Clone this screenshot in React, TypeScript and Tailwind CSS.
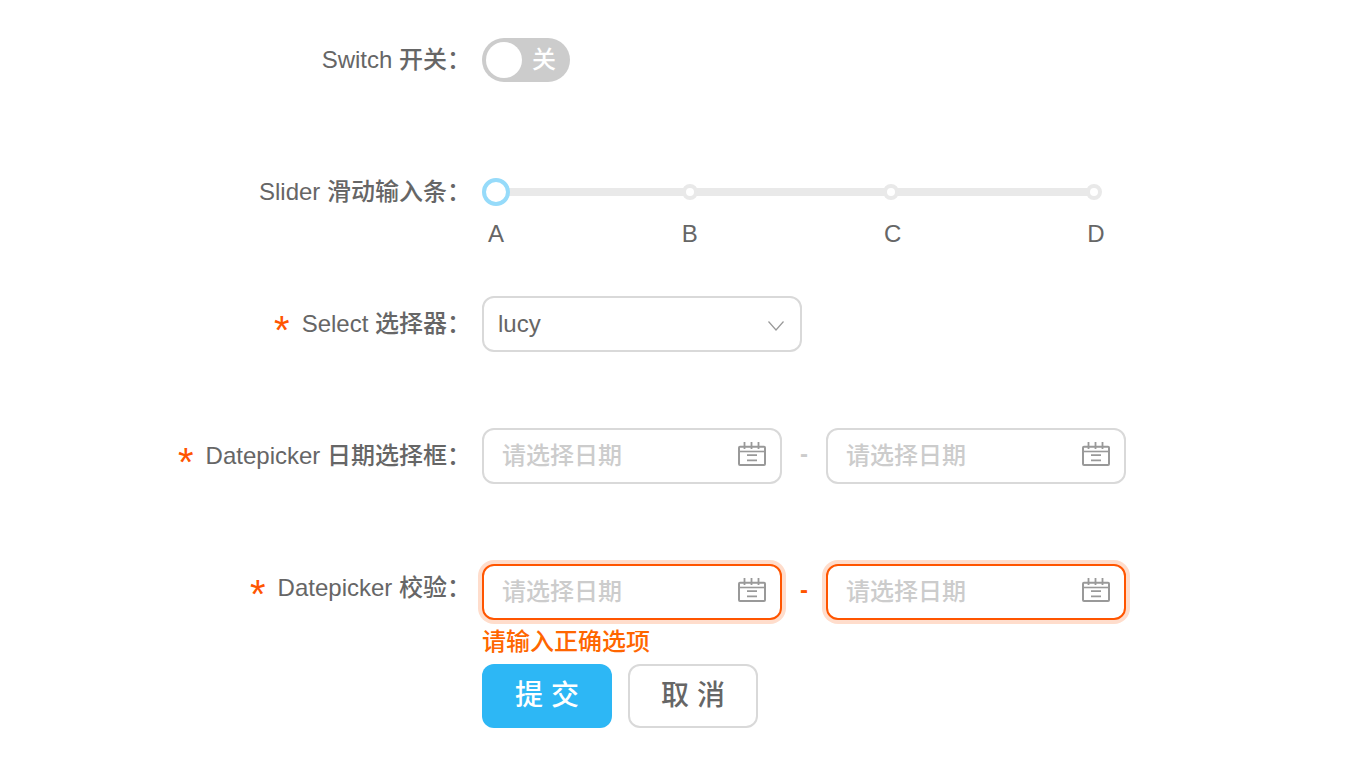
import { useState, type ReactNode } from "react";

type FieldProps = {
  id: string;
  label: string;
  required?: boolean;
  children: ReactNode;
};

function Field({ id, label, required, children }: FieldProps) {
  return (
    <div className="grid grid-cols-[471px_minmax(0,1fr)] gap-x-[11px]">
      <label
        htmlFor={id}
        className="flex h-14 items-center justify-end whitespace-nowrap"
      >
        {required && (
          <span className="mr-3 pt-3 text-[40px] leading-10 text-[#ff5500]">*</span>
        )}
        <span>{label}：</span>
      </label>
      <div>{children}</div>
    </div>
  );
}

function CalendarIcon() {
  return (
    <svg
      width="28"
      height="24"
      viewBox="0 0 28 24"
      fill="none"
      stroke="#999999"
      strokeWidth="2"
      aria-hidden="true"
    >
      <rect x="1" y="4.8" width="26" height="18.2" rx="1" />
      <path d="M1 9.5H27" strokeWidth="1.6" />
      <path d="M6.5 0V7M13.5 0V7M20.5 0V7" strokeWidth="1.8" />
      <path d="M9 13.2H19M9 18.3H19" strokeWidth="1.8" />
    </svg>
  );
}

function DateInput({ id, label, invalid }: { id: string; label: string; invalid?: boolean }) {
  return (
    <div
      className={
        invalid
          ? "flex h-14 w-[300px] items-center rounded-xl border-2 border-[#ff5500] bg-white pr-[14px] pl-[18px] ring-4 ring-[#ffddcc]"
          : "flex h-14 w-[300px] items-center rounded-xl border-2 border-[#d9d9d9] bg-white pr-[14px] pl-[18px]"
      }
    >
      <input
        id={id}
        type="text"
        aria-label={label}
        aria-invalid={invalid}
        placeholder="请选择日期"
        className="h-full min-w-0 flex-1 bg-transparent outline-none placeholder:text-[#cccccc] placeholder:opacity-100"
      />
      <button type="button" aria-label="打开日历" className="pb-1">
        <CalendarIcon />
      </button>
    </div>
  );
}

function DateRange({ id, name, invalid }: { id: string; name: string; invalid?: boolean }) {
  return (
    <div className="flex items-center">
      <DateInput id={id} label={`${name} 开始`} invalid={invalid} />
      <span
        className={
          invalid
            ? "w-11 pb-1 text-center font-bold text-[#ff5500]"
            : "w-11 pb-1 text-center font-bold text-[#cccccc]"
        }
      >
        -
      </span>
      <DateInput id={`${id}-end`} label={`${name} 结束`} invalid={invalid} />
    </div>
  );
}

const dots = [32.5, 66, 100];
const marks = [
  { text: "A", at: 0 },
  { text: "B", at: 32.3 },
  { text: "C", at: 66.1 },
  { text: "D", at: 100 },
];

function MarkedSlider({ id }: { id: string }) {
  const [value, setValue] = useState(0);
  return (
    <div className="w-[620px]">
      <div className="relative flex h-14 items-center">
        <div className="absolute right-1 left-2 h-2 rounded-full bg-[#e9e9e9]" />
        <div className="absolute right-2 left-[14px] h-4">
          {dots.map((at) => (
            <span
              key={at}
              className="absolute size-4 -translate-x-1/2 rounded-full border-4 border-[#e9e9e9] bg-white"
              style={{ left: `${at}%` }}
            />
          ))}
        </div>
        <input
          id={id}
          type="range"
          min={0}
          max={100}
          value={value}
          onChange={(e) => setValue(Number(e.target.value))}
          className="relative h-7 w-full cursor-pointer appearance-none bg-transparent outline-none [&::-webkit-slider-thumb]:size-7 [&::-webkit-slider-thumb]:appearance-none [&::-webkit-slider-thumb]:rounded-full [&::-webkit-slider-thumb]:border-4 [&::-webkit-slider-thumb]:border-[#96dbfa] [&::-webkit-slider-thumb]:bg-white"
        />
      </div>
      <div className="relative mr-[6px] ml-[14px] h-7 leading-7">
        {marks.map((mark) => (
          <span
            key={mark.text}
            className="absolute -translate-x-1/2"
            style={{ left: `${mark.at}%` }}
          >
            {mark.text}
          </span>
        ))}
      </div>
    </div>
  );
}

function Toggle({ id }: { id: string }) {
  const [on, setOn] = useState(false);
  return (
    <button
      id={id}
      type="button"
      role="switch"
      aria-checked={on}
      onClick={() => setOn(!on)}
      className={
        on
          ? "flex h-11 w-[88px] flex-row-reverse items-center gap-[10px] rounded-full bg-[#2db7f5] p-1 text-white"
          : "flex h-11 w-[88px] items-center gap-[10px] rounded-full bg-[#cccccc] p-1 text-white"
      }
    >
      <span className="size-9 rounded-full bg-white" />
      <span>{on ? "开" : "关"}</span>
    </button>
  );
}

export default function App() {
  return (
    <form
      onSubmit={(e) => e.preventDefault()}
      className="min-h-screen bg-white pt-8 pb-8 font-['Liberation_Sans','Noto_Sans_CJK_SC',sans-serif] text-2xl font-medium text-[#666666]"
    >
      <div className="flex flex-col gap-[76px]">
        <Field id="switch" label="Switch 开关">
          <div className="flex h-14 items-center">
            <Toggle id="switch" />
          </div>
        </Field>
        <div className="-mb-7">
          <Field id="slider" label="Slider 滑动输入条">
            <MarkedSlider id="slider" />
          </Field>
        </div>
        <Field id="select" label="Select 选择器" required>
          <div className="relative w-80">
            <select
              id="select"
              defaultValue="lucy"
              className="block h-14 w-full appearance-none rounded-xl border-2 border-[#d9d9d9] bg-white px-[14px] outline-none"
            >
              <option value="jack">jack</option>
              <option value="lucy">lucy</option>
            </select>
            <svg
              className="pointer-events-none absolute top-6 right-4"
              width="18"
              height="12"
              viewBox="0 0 18 12"
              fill="none"
              stroke="#999999"
              strokeWidth="1.2"
              aria-hidden="true"
            >
              <path d="M0.5 1.5L8 10L15.5 1.5" />
            </svg>
          </div>
        </Field>
        <Field id="date" label="Datepicker 日期选择框" required>
          <DateRange id="date" name="日期选择框" />
        </Field>
        <Field id="check" label="Datepicker 校验" required>
          <div className="pt-1">
            <DateRange id="check" name="校验" invalid />
            <p className="leading-[44px] text-[#ff6600]">请输入正确选项</p>
            <div className="flex gap-4 text-[28px]">
              <button
                type="submit"
                className="h-16 w-[130px] rounded-xl bg-[#2db7f5] text-white"
              >
                提 交
              </button>
              <button
                type="button"
                className="h-16 w-[130px] rounded-xl border-2 border-[#d9d9d9] bg-white"
              >
                取 消
              </button>
            </div>
          </div>
        </Field>
      </div>
    </form>
  );
}
